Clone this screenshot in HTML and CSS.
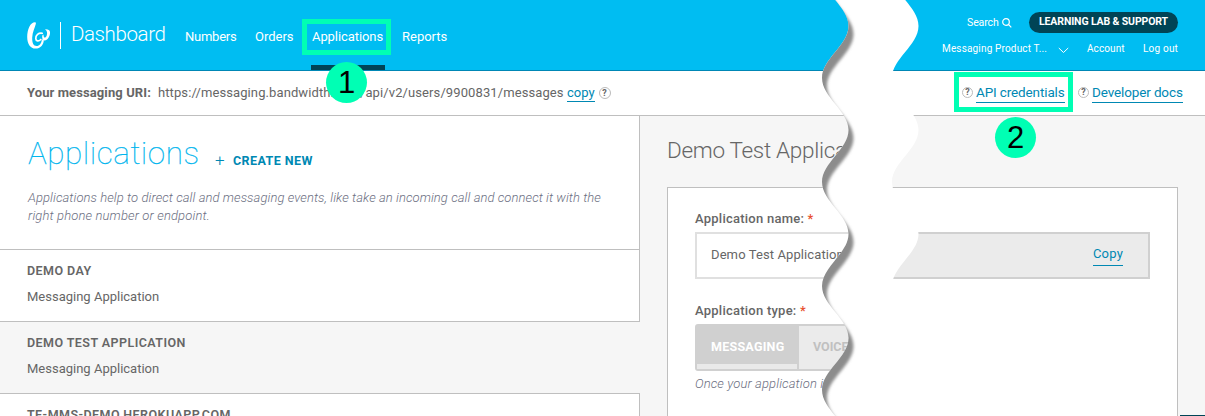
FILE: index.html
```
<!DOCTYPE html>
<html lang="en">
<head>
<meta charset="utf-8">
<title>Dashboard - Applications</title>
<link rel="stylesheet" href="styles.css">
</head>
<body>
<div class="page">
  <header class="header">
    <svg class="logo" width="24" height="28" viewBox="0 0 24 28" fill="#fff">
      <path d="M8.200 1.200C3.500 1 .2 8 .2 16C.2 23 3.500 27.600 8.500 27.600C13.500 27.600 17 23.500 16.800 18.500L14.800 18.500C14.500 22.500 12.500 25 9.600 25C6.400 25 5 21.500 5.200 16.500C5.400 11 8 6.500 8.800 3C9 2 8.900 1.400 8.200 1.200Z"/>
      <path d="M15.200 12.300C11.500 11.700 8.600 14.200 8.800 17.600C9 20.300 11.500 20.800 13.800 18.500" fill="none" stroke="#fff" stroke-width="1.700" stroke-linecap="round"/>
      <path d="M15.200 14.500C14.800 18.200 16.300 20.200 18.600 19.300C21.600 18.100 23.300 14 23 11C22.800 9 21 8 18 8.200C20.200 9.500 20.500 12 19.800 14.200C19.200 16.300 17.600 17.300 16.900 16C16.500 15.300 16.600 14.500 16.600 13.500Z"/>
    </svg>
    <span class="divider"></span>
    <span class="brand">Dashboard</span>
    <nav class="nav">
      <a class="tab numbers">Numbers</a>
      <a class="tab orders">Orders</a>
      <a class="tab active">Applications</a>
      <a class="tab reports">Reports</a>
    </nav>
    <div class="tools">
      <div class="tools-top">
        <span class="search">Search</span>
        <svg width="10" height="10" viewBox="0 0 10 10" fill="none" stroke="#fff" stroke-width="1.200"><circle cx="4" cy="4" r="3.300"/><path d="M6.400 6.400L9.300 9.300"/></svg>
        <span class="pill">LEARNING LAB &amp; SUPPORT</span>
      </div>
      <div class="tools-bottom">
        <span class="org">Messaging Product T...</span>
        <svg width="11" height="7" viewBox="0 0 11 7" fill="none" stroke="#fff"><path d="M.8 1L5.500 5.500L10.200 1"/></svg>
        <span class="account">Account</span>
        <span class="logout">Log out</span>
      </div>
    </div>
  </header>

  <div class="uribar">
    <span class="uri-label">Your messaging URI:</span>
    <span class="uri">https://messaging.bandwidth.com/api/v2/users/9900831/messages</span>
    <a class="link copy">copy</a>
    <span class="help">?</span>
    <div class="resources">
      <span class="help">?</span><a class="link api">API credentials</a>
      <span class="help second">?</span><a class="link docs">Developer docs</a>
    </div>
  </div>

  <main class="main">
    <section class="list">
      <div class="list-head">
        <div class="title-row"><h1>Applications</h1><span class="plus">+</span><span class="create">CREATE NEW</span></div>
        <p class="intro">Applications help to direct call and messaging events, like take an incoming call and connect it with the<br><span class="intro-end">right phone number or endpoint.</span></p>
      </div>
      <div class="item"><b class="day">DEMO DAY</b><span>Messaging Application</span></div>
      <div class="item selected"><b>DEMO TEST APPLICATION</b><span>Messaging Application</span></div>
      <div class="item"><b>TE-MMS-DEMO.HEROKUAPP.COM</b></div>
    </section>
    <section class="detail">
      <h2>Demo Test Application</h2>
      <div class="card">
        <label class="name-label">Application name: <i>*</i></label>
        <div class="field">
          <span class="value">Demo Test Application</span>
          <span class="field-action"><a class="link">Copy</a></span>
        </div>
        <label class="type-label">Application type: <i>*</i></label>
        <div class="types"><span class="type on">MESSAGING</span><span class="type">VOICE</span></div>
        <p class="note">Once your application is</p>
      </div>
    </section>
  </main>

  <div class="corner"></div>

  <svg class="tear" width="120" height="416" viewBox="0 0 120 416">
    <defs>
      <clipPath id="strip">
        <path d="M28.500-78C28.500-59 2-45 2-26C2-7 28.500 7 28.500 26C28.500 45 2 59 2 78C2 97 28.500 111 28.500 130C28.500 149 2 163 2 182C2 201 28.500 215 28.500 234C28.500 253 2 267 2 286C2 305 28.500 319 28.500 338C28.500 357 2 371 2 390C2 409 28.500 423 28.500 442H98.500C98.500 423 72 409 72 390C72 371 98.500 357 98.500 338C98.500 319 72 305 72 286C72 267 98.500 253 98.500 234C98.500 215 72 201 72 182C72 163 98.500 149 98.500 130C98.500 111 72 97 72 78C72 59 98.500 45 98.500 26C98.500 7 72-7 72-26C72-45 98.500-59 98.500-78Z"/>
      </clipPath>
      <filter id="soft" x="-20%" y="-5%" width="140%" height="110%"><feGaussianBlur stdDeviation="1.700"/></filter>
    </defs>
    <g clip-path="url(#strip)">
      <rect width="120" height="416" fill="#fff"/>
      <path transform="translate(5 8)" filter="url(#soft)" fill="#8c8c8c" d="M-30-78H28.500C28.500-59 2-45 2-26C2-7 28.500 7 28.500 26C28.500 45 2 59 2 78C2 97 28.500 111 28.500 130C28.500 149 2 163 2 182C2 201 28.500 215 28.500 234C28.500 253 2 267 2 286C2 305 28.500 319 28.500 338C28.500 357 2 371 2 390C2 409 28.500 423 28.500 442H-30Z"/>
    </g>
  </svg>

  <div class="frame frame-one"></div>
  <div class="step step-one">1</div>
  <div class="frame frame-two"></div>
  <div class="step step-two">2</div>
</div>
</body>
</html>
```
FILE: styles.css
```
* { box-sizing: border-box; }
body { margin: 0; font: 13px/20px Roboto, sans-serif; color: #666; }
h1, h2, p { margin: 0; }
svg { display: block; flex: none; }
.page { position: relative; width: 1205px; height: 416px; overflow: hidden; background: #fff; }

.header { display: flex; height: 71px; padding-left: 27px; background: #00bdf2; border-bottom: 1px solid #0087b5; color: #fff; white-space: nowrap; }
.logo { margin-top: 21px; }
.divider { width: 1px; height: 27px; margin: 22px 0 0 9px; background: #fff; }
.brand { width: 96px; margin: 22px 0 0 10px; font-size: 20.5px; line-height: 24px; font-weight: 300; letter-spacing: -.4px; }
.nav { display: flex; }
.tab { height: 70px; padding-top: 27px; }
.numbers { width: 52px; margin-left: 18px; letter-spacing: -.24px; }
.orders { width: 39px; margin-left: 18px; }
.active { width: 74px; margin-left: 17px; padding-left: 1px; border-bottom: 5px solid #004456; letter-spacing: -.08px; }
.reports { margin-left: 17px; }
.tools { display: flex; flex-direction: column; align-items: flex-end; margin: 12px 27px 0 auto; }
.tools-top, .tools-bottom { display: flex; align-items: center; }
.search { width: 32px; margin-right: 3px; font-size: 10.500px; letter-spacing: -.1px; }
.pill { width: 149px; height: 21px; margin-left: 17px; border-radius: 11px; background: #004456; text-align: center; font-size: 10.500px; line-height: 20px; font-weight: 700; letter-spacing: -.13px; }
.tools-bottom { height: 20px; margin-top: 6px; font-size: 10px; letter-spacing: .1px; }
.org { width: 107px; letter-spacing: .16px; }
.org + svg { margin: 2px 18px 0 9px; }
.account { width: 38px; margin-right: 18px; }
.logout { width: 35px; letter-spacing: .2px; }

.uribar { display: flex; height: 45px; padding: 12px 0 0 27px; border-bottom: 1px solid #bfbfbf; white-space: nowrap; }
.uri-label { width: 131px; font-weight: 700; letter-spacing: .1px; }
.uri { width: 409px; letter-spacing: .1px; }
.link { color: #0088b3; border-bottom: 1px solid #0088b3; height: 20px; }
.copy { height: 19px; margin-right: 4px; }
.help { width: 12px; height: 12px; margin-top: 4px; border: 1px solid #bbb; border-radius: 50%; font-size: 9px; line-height: 10px; font-weight: 700; text-align: center; }
.resources { display: flex; margin: 0 22px 0 auto; font-size: 13.500px; }
.resources .link { line-height: 19px; }
.resources .help { width: 11px; height: 11px; margin-top: 4px; line-height: 9px; }
.api { width: 89px; margin-left: 3px; letter-spacing: -.13px; }
.docs { width: 91px; margin-left: 3px; letter-spacing: -.13px; }
.resources .second { margin-left: 13px; }

.main { display: flex; height: 300px; }
.list { width: 640px; border-right: 1px solid #bfbfbf; white-space: nowrap; }
.list-head { height: 134px; padding: 19px 0 0 28px; border-bottom: 1px solid #bfbfbf; }
.title-row { display: flex; height: 40px; }
h1 { width: 187px; font-size: 31.500px; line-height: 38px; font-weight: 100; letter-spacing: .5px; color: #00b5ee; -webkit-text-stroke: .25px #00b5ee; }
.plus, .create { color: #0088b3; }
.plus { width: 18px; margin-top: 15px; font-size: 17px; font-weight: 300; }
.create { margin-top: 16px; font-size: 12.500px; font-weight: 700; letter-spacing: .42px; }
.intro { margin-top: 14px; font-size: 13px; line-height: 18px; font-weight: 300; font-style: italic; letter-spacing: .08px; color: #6c6f82; }
.intro-end { letter-spacing: .14px; }
.item { display: flex; flex-direction: column; height: 72px; padding: 11px 0 0 27px; border-bottom: 1px solid #bfbfbf; }
.item b { height: 26px; font-size: 12.500px; font-weight: 600; letter-spacing: .44px; }
.selected { background: #f6f6f6; width: 640px; }

.detail { flex: 1; padding: 19px 27px 0 27px; background: #f6f6f6; white-space: nowrap; }
h2 { height: 52px; font-size: 22.500px; line-height: 31px; font-weight: 300; letter-spacing: -.3px; }
.card { height: 260px; padding: 21px 27px 0 27px; border: 1px solid #bfbfbf; background: #fff; }
.card label { display: block; font-weight: 500; letter-spacing: .24px; }
.card label i { color: #e8502f; font-style: normal; }
.field { display: flex; height: 47px; margin-top: 3px; }
.value { width: 175px; padding: 11px 0 0 14px; border: 2px solid #e0e0e0; border-right: 0; letter-spacing: .1px; }
.field-action { display: flex; flex: 1; justify-content: flex-end; padding: 10px 25px 0 0; border: 2px solid #d0d0d0; border-left: 0; background: #ebebeb; }
.field-action .link { height: 22px; letter-spacing: .2px; }
.type-label { margin-top: 22px; }
.types { display: flex; width: 200px; height: 47px; margin-top: 3px; border: 2px solid #d0d0d0; border-radius: 3px; background: #ebebeb; color: #c0c0c0; font-size: 12.500px; font-weight: 700; }
.type { padding: 11px 0 0 14px; }
.on { width: 102px; height: 43px; color: #fff; background: linear-gradient(#d0d0d0 38px, #e9e9e9 38px) 0 0 / 100px 100% no-repeat #d0d0d0; letter-spacing: .25px; }
.note { margin-top: 3px; font-weight: 300; font-style: italic; letter-spacing: .12px; color: #6c6f82; }

.corner { position: absolute; left: 1180px; top: 415px; width: 25px; height: 1px; background: #004456; }
.tear { position: absolute; left: 820px; top: 0; }
.frame { position: absolute; border: 5px solid #00ffb4; }
.frame-one { left: 302px; top: 19px; width: 89px; height: 36px; }
.frame-two { left: 954px; top: 72px; width: 119px; height: 40px; }
.step { position: absolute; width: 41px; height: 41px; border-radius: 50%; background: #00ffb4; color: #000; font: 31px/41px "Liberation Sans", Arial, sans-serif; text-align: center; }
.step-one { left: 326px; top: 62px; }
.step-two { left: 995px; top: 117px; }
```
